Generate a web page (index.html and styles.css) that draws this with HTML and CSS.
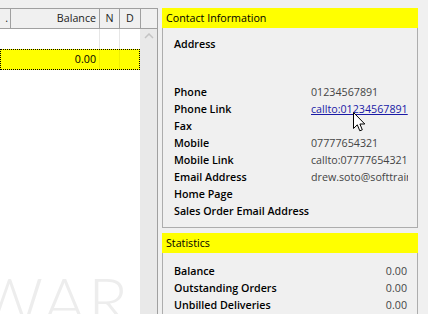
FILE: index.html
```html
<!DOCTYPE html>
<html lang="en">
<head>
  <meta charset="UTF-8">
  <title>Customer</title>
  <link rel="stylesheet" href="styles.css">
</head>
<body>
  <div class="page">
    <div class="grid">
      <div class="grid-head">
        <div class="hcell c-prev">.</div>
        <div class="hcell c-bal">Balance</div>
        <div class="hcell c-n">N</div>
        <div class="hcell c-d">D</div>
        <div class="hcell c-corner"></div>
      </div>
      <div class="grid-body">
        <div class="rows">
          <div class="row">
            <div class="cell c-prev"></div>
            <div class="cell c-bal"></div>
            <div class="cell c-n"></div>
            <div class="cell c-d"></div>
          </div>
          <div class="row selected">
            <div class="cell c-prev"></div>
            <div class="cell c-bal">0.00</div>
            <div class="cell c-n"></div>
            <div class="cell c-d"></div>
          </div>
          <div class="watermark"><span>WAR</span></div>
        </div>
        <div class="vscroll">
          <svg width="10" height="6" viewBox="0 0 10 6"><path d="M1 5 L5 1 L9 5" fill="none" stroke="#c4c4c4" stroke-width="1.5"/></svg>
        </div>
      </div>
    </div>

    <div class="side">
      <div class="panel-head">Contact Information</div>
      <div class="panel-body">
        <div class="line address"><span class="lbl">Address</span><span class="val"></span></div>
        <div class="line"><span class="lbl">Phone</span><span class="val">01234567891</span></div>
        <div class="line"><span class="lbl">Phone Link</span>
          <span class="val link-cell"><a href="#">callto:01234567891</a>
            <svg class="cursor" width="13" height="20" viewBox="0 0 13 20"><path d="M0.5 0.5 L0.5 16.5 L4.3 12.8 L6.8 18.8 L9.3 17.8 L6.9 12 L11.8 12 Z" fill="#fff" stroke="#000" stroke-width="1" stroke-linejoin="miter"/></svg>
          </span>
        </div>
        <div class="line"><span class="lbl">Fax</span><span class="val"></span></div>
        <div class="line"><span class="lbl">Mobile</span><span class="val">07777654321</span></div>
        <div class="line"><span class="lbl">Mobile Link</span><span class="val">callto:07777654321</span></div>
        <div class="line"><span class="lbl">Email Address</span><span class="val">drew.soto@softtrainer.com</span></div>
        <div class="line"><span class="lbl">Home Page</span><span class="val"></span></div>
        <div class="line"><span class="lbl">Sales Order Email Address</span><span class="val"></span></div>
      </div>

      <div class="panel-head stats-head">Statistics</div>
      <div class="panel-body stats">
        <div class="line"><span class="lbl">Balance</span><span class="num">0.00</span></div>
        <div class="line"><span class="lbl">Outstanding Orders</span><span class="num">0.00</span></div>
        <div class="line"><span class="lbl">Unbilled Deliveries</span><span class="num">0.00</span></div>
      </div>
    </div>
  </div>
</body>
</html>
```

FILE: styles.css
```css
body {
  margin: 0;
  background: #f0f0f0;
  font-family: "Open Sans", "Noto Sans", sans-serif;
  font-size: 10.7px;
  color: #000;
  overflow: hidden;
}
.page {
  display: flex;
  height: 314px;
  padding-top: 8px;
  box-sizing: border-box;
}

/* grid on the left */
.grid {
  width: 158px;
  display: flex;
  flex-direction: column;
  border-right: 1px solid #a0a0a0;
  box-sizing: border-box;
}
.grid-head {
  display: flex;
  height: 21px;
  border-top: 1px solid #a0a0a0;
  border-bottom: 1px solid #a0a0a0;
  box-sizing: border-box;
  background: #f0f0f0;
}
.hcell {
  border-right: 1px solid #a0a0a0;
  line-height: 19px;
  padding: 0 3px;
  white-space: nowrap;
  overflow: hidden;
  color: #222;
}
.c-prev { width: 11px; text-align: right; padding: 0 2px 0 0; box-sizing: border-box; }
.c-bal { width: 89px; text-align: right; box-sizing: border-box; padding-right: 3px; }
.c-n { width: 20px; text-align: center; box-sizing: border-box; padding: 0; }
.c-d { width: 21px; text-align: center; box-sizing: border-box; padding: 0; }
.c-corner { flex: 1; border-right: none; }

.grid-body {
  flex: 1;
  display: flex;
  overflow: hidden;
}
.rows {
  width: 140px;
  background: #fff;
  position: relative;
  overflow: hidden;
}
.row {
  display: flex;
  height: 20px;
  line-height: 20px;
}
.cell {
  box-sizing: border-box;
}
.row .c-bal, .row .c-n {
  border-right: 1px solid #e6e6e6;
}
.row .c-d { width: 20px; }
.row.selected {
  background: #ffff00;
  height: 21px;
  line-height: 21px;
  outline: 1px dotted #000;
  outline-offset: -1px;
}
.row.selected .c-bal, .row.selected .c-n {
  border-right-color: #f0f000;
}
.watermark {
  position: absolute;
  left: 0;
  top: 238px;
  width: 140px;
  height: 54px;
  overflow: hidden;
  font-family: "Lato", sans-serif;
  font-weight: 300;
  font-size: 66px;
  line-height: 66px;
  color: #ededed;
  white-space: nowrap;
}
.watermark span {
  display: block;
  margin-left: -24px;
  letter-spacing: 2px;
}
.vscroll {
  flex: 1;
  background: #e9e9e9;
  display: flex;
  justify-content: center;
  align-items: flex-start;
  padding-top: 4px;
}

/* panels on the right */
.side {
  width: 256px;
  margin-left: 4px;
  display: flex;
  flex-direction: column;
}
.panel-head {
  background: #ffff00;
  height: 20px;
  line-height: 20px;
  padding-left: 4px;
}
.stats-head {
  margin-top: 5px;
}
.panel-body {
  border: 1px solid #adadad;
  border-top: none;
  padding: 8px 9px 7px 11px;
}
.stats {
  flex: 1;
  padding-top: 10px;
  padding-right: 10px;
  border-bottom: none;
}
.line {
  display: flex;
  height: 17px;
  line-height: 17px;
}
.line.address {
  height: 48px;
}
.lbl {
  width: 137px;
  font-weight: 600;
  flex-shrink: 0;
  white-space: nowrap;
}
.val {
  flex: 1;
  color: #444;
  white-space: nowrap;
  overflow: hidden;
}
.link-cell {
  position: relative;
  overflow: visible;
}
.link-cell a {
  color: #1a1aa6;
  text-decoration: underline;
}
.cursor {
  position: absolute;
  left: 42px;
  top: 11px;
}
.num {
  flex: 1;
  text-align: right;
  color: #444;
}
```
